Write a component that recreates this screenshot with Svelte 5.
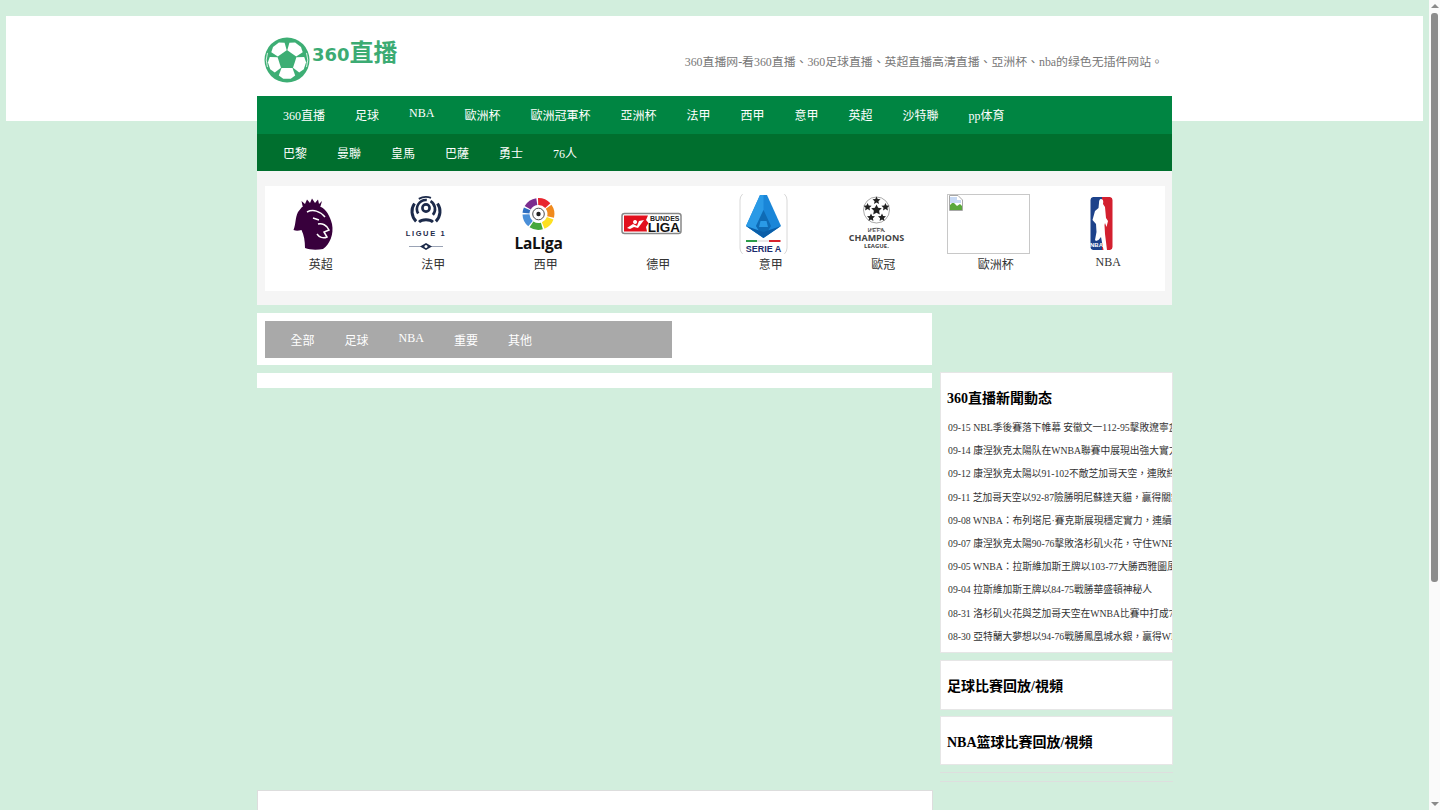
<script>
  const nav1 = ['360直播','足球','NBA','歐洲杯','歐洲冠軍杯','亞洲杯','法甲','西甲','意甲','英超','沙特聯','pp体育'];
  const nav2 = ['巴黎','曼聯','皇馬','巴薩','勇士','76人'];
  const tabs = ['全部','足球','NBA','重要','其他'];
  const news = [
    '09-15 NBL季後賽落下帷幕 安徽文一112-95擊敗遼寧盒子奪冠',
    '09-14 康涅狄克太陽队在WNBA聯賽中展現出強大實力並取勝',
    '09-12 康涅狄克太陽以91-102不敵芝加哥天空，連敗終結賽季',
    '09-11 芝加哥天空以92-87險勝明尼蘇達天貓，贏得關鍵勝利',
    '09-08 WNBA：布列塔尼·賽克斯展現穩定實力，連續多場得分',
    '09-07 康涅狄克太陽90-76擊敗洛杉矶火花，守住WNBA排名',
    '09-05 WNBA：拉斯維加斯王牌以103-77大勝西雅圖風暴隊',
    '09-04 拉斯維加斯王牌以84-75戰勝華盛頓神秘人',
    '08-31 洛杉矶火花與芝加哥天空在WNBA比賽中打成7分差',
    '08-30 亞特蘭大夢想以94-76戰勝鳳凰城水銀，贏得WNBA勝利'
  ];
  const pol = (cx, cy, r, deg) => {
    const a = (deg * Math.PI) / 180;
    return [cx + r * Math.cos(a), cy + r * Math.sin(a)];
  };
  const pts = (list) => list.map((p) => p.map((n) => n.toFixed(1)).join(',')).join(' ');
  const ballPatches = [-126, -54, 18, 90, 162].map((a) =>
    pts([pol(23, 23, 9.8, a - 34), pol(23, 23, 9.8, a + 34), pol(23, 23, 17.5, a + 28), pol(23, 23, 19.2, a + 11), pol(23, 23, 19.2, a - 11), pol(23, 23, 17.5, a - 28)])
  );
  const ballCore = pts([-90, -18, 54, 126, 198].map((a) => pol(23, 23, 8.6, a)));
  const arc = (cx, cy, r, a0, a1) => {
    const [x0, y0] = pol(cx, cy, r, a0);
    const [x1, y1] = pol(cx, cy, r, a1);
    return `M${x0.toFixed(1)} ${y0.toFixed(1)}A${r} ${r} 0 0 1 ${x1.toFixed(1)} ${y1.toFixed(1)}`;
  };
  const wheel = [
    ['#7b2d8e', -150, -98], ['#e8262d', -92, -42], ['#f08a1d', -36, 14],
    ['#fde021', 20, 68], ['#46a83c', 74, 124], ['#4a8fd8', 130, 178], ['#2f6fc0', 184, 204]
  ].map(([c, a, b]) => ({ c, d: arc(41.5, 20, 12.5, a, b) }));
  const star = (cx, cy, r) => {
    const list = [];
    for (let i = 0; i < 10; i++) list.push(pol(cx, cy, i % 2 ? r * 0.48 : r, -90 + i * 36));
    return pts(list);
  };
  const uclStars = [[41.5, 16, 5.6], ...[-90, -18, 54, 126, 198].map((a) => [...pol(41.5, 16, 9.4, a), 4.2])].map(([x, y, r]) => star(x, y, r));
  const leagues = ['英超','法甲','西甲','德甲','意甲','歐冠','歐洲杯','NBA'];
</script>

<div class="page">
  <div class="main">
    <header class="header">
      <div class="wrap head-row">
        <div class="logo">
          <svg class="ball" width="46" height="46" viewBox="0 0 46 46">
            <circle cx="23" cy="23" r="22.5" fill="#3dae74" />
            <path d={arc(23, 23, 20.8, -20, 20)} fill="none" stroke="#fff" stroke-width=".8" />
            <path d={arc(23, 23, 20.8, 160, 200)} fill="none" stroke="#fff" stroke-width=".8" />
            {#each ballPatches as p}<polygon points={p} fill="#fff" />{/each}
            <polygon points={ballCore} fill="#3dae74" />
          </svg>
          <span class="logo-text"><span class="logo-num">360</span>直播</span>
        </div>
        <p class="slogan">360直播网-看360直播、360足球直播、英超直播高清直播、亞洲杯、nba的绿色无插件网站。</p>
      </div>
    </header>

    <div class="wrap body-wrap">
      <nav>
        <ul class="nav nav-a">{#each nav1 as n}<li>{n}</li>{/each}</ul>
        <ul class="nav nav-b">{#each nav2 as n}<li>{n}</li>{/each}</ul>
      </nav>

      <section class="league-panel">
        <div class="leagues">
          {#each leagues as name, i}
            <div class="league">
              <div class="crest">
                {#if i === 0}
                  <svg width="83" height="60" viewBox="0 0 83 60">
                    <path fill="#38003c" d="M30 13L49 13C54 15 58 22 60 30C62 40 58 50 51 55C45 56 38 56 33 54C33 47 32 41 29.500 36C26 37 24 37 21.500 36C24 30 23 24 26 18Z" />
                    <polygon fill="#38003c" points="31,14 29.500,7 33,10 35,5.500 38,9 40,4.500 43,9 46,5.500 47,10 50,7 48,14" />
                    <path fill="none" stroke="#fff" stroke-width="1.500" d="M35 18C41 15 48 17 53 23M41 24L47 26M46 30C50 29 55 31 57 36L52 38L55 43C51 45 47 43 45 40" />
                  </svg>
                {:else if i === 1}
                  <svg width="83" height="60" viewBox="0 0 83 60">
                    <g fill="none" stroke="#1c2a4a">
                      <circle cx="41" cy="14" r="3.600" stroke-width="2.600" />
                      <path stroke-width="2.600" d={arc(41, 15, 9, 150, 275)} />
                      <path stroke-width="2.600" d={arc(41, 15, 9, -60, 40)} />
                      <path stroke-width="3" d={arc(41, 17.5, 14, 135, 215)} />
                      <path stroke-width="3" d={arc(41, 17.5, 14, -35, 45)} />
                      <path stroke-width="1.800" d={arc(41, 17.5, 14.5, -120, -70)} />
                      <path stroke-width="2.800" d="M34 28C37 25 45 25 48 28" />
                    </g>
                    <text class="lg1" x="41" y="42" text-anchor="middle">LIGUE 1</text>
                    <path d="M24 52.500H58" stroke="#9aa3b5" stroke-width="1" />
                    <path d="M35 52.500L41 49L47 52.500L41 56Z" fill="#1c2a4a" />
                    <circle cx="41" cy="52.500" r="1.500" fill="#fff" />
                  </svg>
                {:else if i === 2}
                  <svg width="83" height="60" viewBox="0 0 83 60">
                    {#each wheel as s}<path d={s.d} fill="none" stroke={s.c} stroke-width="7" />{/each}
                    <circle cx="41.500" cy="20" r="5.800" fill="#fff" stroke="#222" stroke-width=".8" />
                    <circle cx="41.500" cy="20" r="2.200" fill="#222" />
                    <text class="laliga" x="41.500" y="55" text-anchor="middle">LaLiga</text>
                  </svg>
                {:else if i === 3}
                  <svg width="83" height="60" viewBox="0 0 83 60">
                    <rect x="12" y="19.500" width="59" height="20" rx="2.500" fill="#fff" stroke="#888" stroke-width="1.500" />
                    <path d="M14 21.500H38L36 26L38.500 29L36 33L37 37.500H14Z" fill="#e2101d" />
                    <path d="M17 34L23 30L27 32L29 27L34 26L31 30L28 34L24 33L20 35ZM25 26a2 2 0 1 0 .1 0Z" fill="#fff" />
                    <text class="bl-top" x="69.500" y="26.500" text-anchor="end">BUNDES</text>
                    <text class="bl-main" x="70" y="37.500" text-anchor="end">LIGA</text>
                  </svg>
                {:else if i === 4}
                  <svg width="83" height="60" viewBox="0 0 83 60">
                    <rect x="18" y="-2" width="47" height="64" rx="8" fill="#fff" stroke="#d8d8d8" />
                    <polygon points="38,1 45,1 59,32 41.500,44 24,32" fill="#1a86d8" />
                    <polygon points="38,1 41.500,1 41.500,16 34,32 41.500,44 24,32" fill="#2a9ae6" />
                    <polygon points="41.500,16 34,32 41.500,44 49,32" fill="#0f6bb5" />
                    <polygon points="38.500,27 44.500,27 46,33 37,33" fill="#2a9ae6" />
                    <polygon points="24,32 41.500,44 59,32 41.500,38" fill="#0b5ea8" />
                    <rect x="24" y="46" width="11" height="2" fill="#2d9c4a" />
                    <rect x="35" y="46" width="12" height="2" fill="#e8e8e8" />
                    <rect x="47" y="46" width="11.500" height="2" fill="#d8232f" />
                    <text class="serie" x="41.500" y="58" text-anchor="middle">SERIE A</text>
                  </svg>
                {:else if i === 5}
                  <svg width="83" height="60" viewBox="0 0 83 60">
                    <circle cx="41.500" cy="16" r="13" fill="#fff" stroke="#555" stroke-width=".5" />
                    {#each uclStars as s}<polygon points={s} fill="#222" />{/each}
                    <path d="M33 38C36 33 47 33 50 38" fill="none" stroke="#777" stroke-width="1" />
                    <text class="ucl-a" x="41.500" y="38" text-anchor="middle">UEFA</text>
                    <text class="ucl-b" x="41.500" y="47" text-anchor="middle">CHAMPIONS</text>
                    <text class="ucl-c" x="41.500" y="54" text-anchor="middle">LEAGUE.</text>
                  </svg>
                {:else if i === 6}
                  <div class="broken">
                    <svg width="16" height="16" viewBox="0 0 16 16">
                      <path d="M1.500 .5H10L14.500 5V15.500H1.500Z" fill="#fff" stroke="#a8a8a8" />
                      <path d="M2 14V10L5 7L9 11L12 9L14 11V15H2Z" fill="#5aa83c" />
                      <path d="M2 2H9V5H13V8L2 8Z" fill="#c8daf5" />
                    </svg>
                  </div>
                {:else}
                  <svg width="83" height="60" viewBox="0 0 83 60">
                    <path d="M33 3H42V56H33A3 3 0 0 1 30.500 53V6A3 3 0 0 1 33 3Z" fill="#1d428a" />
                    <path d="M42 3H50A3 3 0 0 1 52.500 6V53A3 3 0 0 1 50 56H42Z" fill="#d3202f" />
                    <path d="M41 5C43.500 5 43.500 8 43 10L45 13L46 24L48 27L46.500 33L45 29L44.500 31L45 40L47 56H43.500L41 43L38.500 46L36 47L35 46L36.500 38L36 30L32.500 26L35 17L38.500 14L39 9C39 7 39.500 5 41 5Z" fill="#fff" />
                    <text class="nba-t" x="36.500" y="53" text-anchor="middle">NBA</text>
                  </svg>
                {/if}
              </div>
              <span class="league-name">{name}</span>
            </div>
          {/each}
        </div>
      </section>

      <div class="columns">
        <div class="left">
          <div class="tab-panel">
            <ul class="nav tab-bar">{#each tabs as t}<li>{t}</li>{/each}</ul>
          </div>
          <div class="strip"></div>
          <div class="lower-box"></div>
        </div>
        <aside class="side">
          <div class="box box-news">
            <h3>360直播新聞動态</h3>
            <ul class="news">{#each news as n}<li>{n}</li>{/each}</ul>
          </div>
          <div class="box box-tall"><h3>足球比賽回放/視頻</h3></div>
          <div class="box box-short"><h3>NBA篮球比賽回放/視頻</h3></div>
          <div class="rule"></div>
          <div class="rule"></div>
        </aside>
      </div>
    </div>
  </div>

  <div class="scrollbar">
    <span class="arrow up"></span>
    <span class="thumb"></span>
    <span class="arrow down"></span>
  </div>
</div>

<style>
  :global(body) {
    margin: 0;
    background: #d2eedd;
  }
  .page {
    display: flex;
    width: 1440px;
    height: 810px;
    overflow: hidden;
    font-family: "Liberation Serif", "Noto Sans CJK TC", serif;
    font-size: 12px;
    color: #333;
  }
  .main {
    width: 1429px;
    flex: none;
    padding-top: 16px;
    box-sizing: border-box;
  }
  ul {
    list-style: none;
    margin: 0;
    padding: 0;
  }
  .header {
    margin: 0 6px;
    height: 105px;
    background: #fff;
  }
  .wrap {
    width: 915px;
    margin: 0 auto;
  }
  .head-row {
    display: flex;
    justify-content: space-between;
    align-items: flex-start;
    box-sizing: border-box;
    padding: 21px 9px 0 7px;
  }
  .logo {
    display: flex;
    align-items: flex-start;
    gap: 2px;
  }
  .ball {
    display: block;
  }
  .logo-text {
    font-family: "Noto Sans CJK SC", sans-serif;
    font-weight: 700;
    font-size: 24px;
    line-height: 28px;
    color: #3cab73;
    white-space: nowrap;
  }
  .logo-num {
    font-family: "DejaVu Sans", sans-serif;
    font-size: 18px;
  }
  .slogan {
    margin: 15px 0 0;
    font-size: 11.88px;
    color: #777;
  }
  .body-wrap {
    margin-top: -25px;
  }
  .nav {
    display: flex;
    align-items: flex-start;
    height: 37.5px;
    box-sizing: border-box;
    padding-left: 11px;
    color: #fff;
  }
  .nav li {
    padding: 10px 15px;
  }
  .nav-a {
    background: #008542;
  }
  .nav-b {
    background: #006f2e;
  }
  .league-panel {
    background: #f5f5f5;
    padding: 15px 7.5px 14px;
  }
  .leagues {
    display: flex;
    height: 105px;
    background: #fff;
    padding-top: 8px;
    box-sizing: border-box;
  }
  .league {
    width: 112.5px;
    display: flex;
    flex-direction: column;
    align-items: center;
  }
  .crest {
    height: 60px;
    margin-right: 14px;
    margin-bottom: 1px;
  }
  .crest svg {
    display: block;
    overflow: hidden;
  }
  .broken {
    width: 83px;
    height: 60px;
    box-sizing: border-box;
    border: 1px solid #c8c8c8;
  }
  .league-name {
    color: #333;
  }
  .lg1 {
    font: 700 7.5px "Liberation Sans", sans-serif;
    letter-spacing: 1.6px;
    fill: #1c2a4a;
  }
  .laliga {
    font: 700 15.5px "Open Sans", sans-serif;
    letter-spacing: -.3px;
    fill: #111;
  }
  .bl-top {
    font: 700 7px "Liberation Sans", sans-serif;
    fill: #222;
  }
  .bl-main {
    font: 700 13.5px "Liberation Sans", sans-serif;
    fill: #111;
  }
  .serie {
    font: 700 9px "Liberation Sans", sans-serif;
    fill: #1a2a6c;
  }
  .ucl-a {
    font: 700 5px "Liberation Sans", sans-serif;
    letter-spacing: 1px;
    fill: #555;
  }
  .ucl-b {
    font: 700 9px "Open Sans", sans-serif;
    fill: #444;
  }
  .ucl-c {
    font: 700 6px "Open Sans", sans-serif;
    fill: #444;
  }
  .nba-t {
    font: 700 6px "Liberation Sans", sans-serif;
    fill: #fff;
  }
  .columns {
    display: flex;
    align-items: flex-start;
    gap: 8px;
    margin-top: 8px;
  }
  .left {
    width: 675px;
    flex: none;
  }
  .tab-panel {
    background: #fff;
    padding: 7.5px 8px;
    height: 52px;
    box-sizing: border-box;
  }
  .tab-bar {
    width: 407px;
    padding-left: 10.5px;
    background: #a9a9a9;
  }
  .strip {
    height: 15px;
    margin-top: 8px;
    background: #fff;
  }
  .lower-box {
    width: 676px;
    height: 60px;
    box-sizing: border-box;
    margin-top: 402px;
    background: #fff;
    border: 1px solid #ddd;
  }
  .side {
    width: 233px;
    flex: none;
    padding-top: 59px;
    color: #000;
  }
  .box {
    background: #fff;
    border: 1px solid #e6e6e6;
    padding: 14px 0 12px 6px;
    margin-bottom: 8px;
    overflow: hidden;
  }
  .box-news {
    margin-bottom: 6.5px;
  }
  .box-tall {
    padding-bottom: 14px;
    margin-bottom: 6px;
  }
  .box-short {
    padding-bottom: 13px;
    margin-bottom: 7px;
  }
  h3 {
    margin: 0;
    font-size: 14px;
    font-weight: 700;
    color: #000;
  }
  .news {
    margin-top: 9px;
    margin-bottom: -7.5px;
    padding-left: 1px;
    font-size: 9.75px;
    color: #333;
  }
  .news li {
    line-height: 23.2px;
    height: 23.2px;
    white-space: nowrap;
  }
  .rule {
    height: 1px;
    margin-bottom: 8px;
    background: #dedede;
  }
  .scrollbar {
    width: 11px;
    flex: none;
    display: flex;
    flex-direction: column;
    align-items: center;
    background: #fafafa;
  }
  .arrow {
    width: 0;
    height: 0;
    border-left: 4px solid transparent;
    border-right: 4px solid transparent;
  }
  .up {
    margin-top: 4px;
    border-bottom: 4px solid #8a8a8a;
  }
  .down {
    margin-top: auto;
    margin-bottom: 4px;
    border-top: 4px solid #8a8a8a;
  }
  .thumb {
    width: 7px;
    height: 569px;
    margin-top: 5px;
    border-radius: 3px;
    background: #8c8c8c;
  }
</style>
